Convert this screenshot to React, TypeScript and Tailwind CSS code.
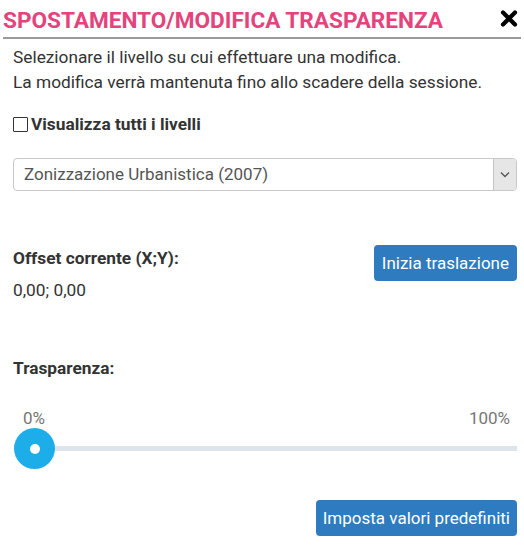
import React, { useState } from "react";

const App = () => {
  const [showAll, setShowAll] = useState<boolean>(false);
  const [layer, setLayer] = useState<string>("Zonizzazione Urbanistica (2007)");

  return (
    <div className="w-[524px] h-[547px] bg-white text-[#333] font-['Roboto',sans-serif] text-[17.3px] overflow-hidden">
      <div className="mx-[3px] pt-[9px] pb-[4px] border-b-2 border-[#9b9b9b] flex items-start justify-between">
        <h1 className="text-[22.6px] leading-[24px] font-bold text-[#e4437c]">
          SPOSTAMENTO/MODIFICA TRASPARENZA
        </h1>
        <button className="mr-[3px] mt-[1px] text-black" aria-label="Chiudi">
          <svg width="18" height="17" viewBox="0 0 18 17">
            <path
              d="M3 2.5 L15 14.5 M15 2.5 L3 14.5"
              stroke="#000"
              strokeWidth="4.2"
              strokeLinecap="round"
              fill="none"
            />
          </svg>
        </button>
      </div>

      <div className="pl-[13px] pr-[7px]">
        <div className="mt-[6px] leading-[25px]">
          <p>Selezionare il livello su cui effettuare una modifica.</p>
          <p>La modifica verrà mantenuta fino allo scadere della sessione.</p>
        </div>

        <label
          className="mt-[19px] flex items-center gap-[3px] leading-[20px] font-bold cursor-pointer"
          onClick={() => setShowAll(!showAll)}
        >
          <span className="w-[15px] h-[15px] border border-[#333] rounded-[1px] bg-white flex items-center justify-center text-[11px]">
            {showAll ? "✓" : ""}
          </span>
          Visualizza tutti i livelli
        </label>

        <div className="mt-[24px] h-[33px] border border-[#c9c9c9] rounded-[4px] flex items-stretch overflow-hidden">
          <div className="flex-1 pl-[10px] flex items-center text-[17px] text-[#555]">{layer}</div>
          <div className="w-[23px] bg-[#e6e6e6] border-l border-[#c4c4c4] flex items-center justify-center">
            <svg width="10" height="7" viewBox="0 0 10 7">
              <path
                d="M1 1.5 L5 5.5 L9 1.5"
                stroke="#555"
                strokeWidth="1.3"
                fill="none"
              />
            </svg>
          </div>
        </div>

        <div className="mt-[54px] flex justify-between items-start">
          <div className="pt-[3px]">
            <p className="font-bold leading-[20px]">Offset corrente (X;Y):</p>
            <p className="mt-[12px] leading-[20px]">0,00; 0,00</p>
          </div>
          <button
            className="h-[36px] px-[8px] rounded-[4px] bg-[#2f7bbf] text-white text-[17px] leading-[20px]"
            onClick={() => setLayer(layer)}
          >
            Inizia traslazione
          </button>
        </div>

        <p className="mt-[57.5px] font-bold leading-[20px]">Trasparenza:</p>

        <div className="mt-[30.5px] flex justify-between pl-[10px] pr-[7px] text-[17px] leading-[20px] text-[#777]">
          <span>0%</span>
          <span>100%</span>
        </div>

        <div className="flex items-center h-[41px] ml-[1px]">
          <div className="w-[41px] h-[41px] rounded-full bg-[#1daeea] flex items-center justify-center shrink-0">
            <div className="w-[10px] h-[10px] rounded-full bg-white" />
          </div>
          <div className="flex-1 h-[5px] bg-[#dfe3ec]" />
        </div>

        <div className="mt-[31px] flex justify-end">
          <button className="h-[36px] px-[7px] rounded-[4px] bg-[#2f7bbf] text-white text-[17px] leading-[20px]">
            Imposta valori predefiniti
          </button>
        </div>
      </div>
    </div>
  );
};

export default App;
